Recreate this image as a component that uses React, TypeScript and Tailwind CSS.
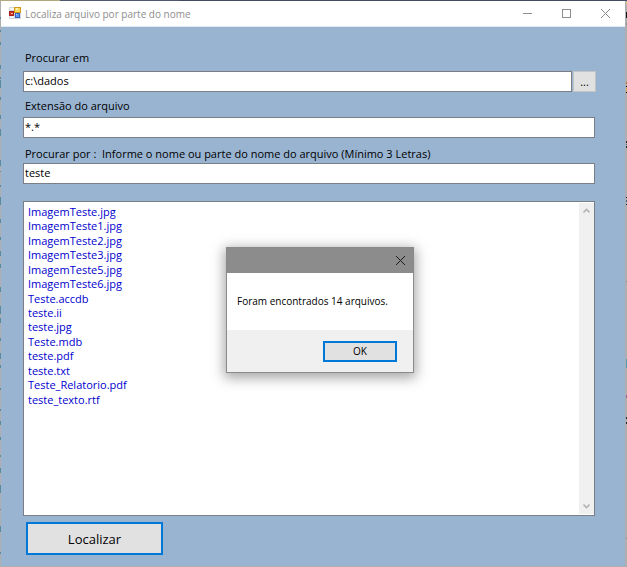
import { useState } from "react";

const FILES = [
  "ImagemTeste.jpg",
  "ImagemTeste1.jpg",
  "ImagemTeste2.jpg",
  "ImagemTeste3.jpg",
  "ImagemTeste5.jpg",
  "ImagemTeste6.jpg",
  "Teste.accdb",
  "teste.ii",
  "teste.jpg",
  "Teste.mdb",
  "teste.pdf",
  "teste.txt",
  "Teste_Relatorio.pdf",
  "teste_texto.rtf",
];

const INPUT =
  "h-[21px] w-full min-w-0 border border-[#7a7f86] bg-white px-px pb-[3px] text-[11px] leading-4 text-black outline-none";
const LABEL = "block px-0.5 text-[11px] leading-4 whitespace-pre text-black";

function AppIcon() {
  return (
    <svg width="13" height="13" viewBox="0 0 13 13" shapeRendering="crispEdges" aria-hidden="true">
      <rect x="0" y="0" width="12" height="12" fill="#d4d7dc" />
      <rect x="1" y="1" width="4" height="2" fill="#f3f5f8" />
      <rect x="1" y="9" width="4" height="2" fill="#eef1f6" />
      <rect x="5" y="0" width="7" height="6" fill="#d19a1f" />
      <rect x="6" y="1" width="5" height="4" fill="#fbd75a" />
      <rect x="7" y="1" width="2" height="2" fill="#fff0b0" />
      <rect x="0" y="4" width="5" height="5" fill="#a3201c" />
      <rect x="1" y="5" width="3" height="3" fill="#d23b2c" />
      <rect x="2" y="6" width="2" height="1" fill="#f7a58e" />
      <rect x="6" y="6" width="5" height="5" fill="#2f62c0" />
      <rect x="7" y="7" width="3" height="3" fill="#5f97ee" />
      <rect x="7" y="7" width="1" height="1" fill="#b9d5ff" />
    </svg>
  );
}

const LEFT_MARKS = [
  [17, 2], [30, 2], [42, 3], [65, 4], [77, 2], [80, 8], [97, 3], [115, 4], [129, 7], [160, 6],
  [171, 1], [185, 2], [197, 8], [219, 4], [237, 3], [251, 5], [264, 4], [287, 5], [306, 8], [318, 5],
  [338, 3], [353, 6], [365, 3], [388, 2], [409, 2], [421, 4], [437, 3], [455, 2], [468, 5], [485, 8], [509, 1], [526, 6], [552, 2],
];

const RIGHT_MARKS: [number, number, string][] = [
  [2, 2, "#e3cf5f"], [12, 6, "#1c1216"], [23, 2, "#8f9299"], [82, 2, "#b8703a"], [86, 1, "#111111"],
  [88, 4, "#d8a860"], [92, 1, "#111111"], [141, 2, "#1b2a38"], [144, 1, "#3b6a8c"], [146, 2, "#1b2a38"],
  [197, 1, "#1b2a38"], [200, 2, "#3b6a8c"], [204, 1, "#1b2a38"], [281, 1, "#858585"], [359, 9, "#4f9db0"],
  [395, 3, "#9a5f95"], [417, 2, "#1b2a38"], [422, 2, "#1b2a38"], [538, 1, "#858585"],
];

/* Slivers of the editor that show behind the window's edges. */
function Desktop() {
  return (
    <div aria-hidden="true">
      <svg width="180" height="1" className="absolute top-0 left-0">
        <rect width="60" height="1" fill="#b0a87c" />
        <rect x="60" width="120" height="1" fill="#505870" />
      </svg>
      <svg width="1" height="556" className="absolute top-0 left-0">
        {LEFT_MARKS.map(([y, h]) => (
          <rect key={y} y={y} width="1" height={h} fill="#5a8a9c" />
        ))}
      </svg>
      <svg width="2" height="556" className="absolute top-0 right-0">
        {RIGHT_MARKS.map(([y, h, fill]) => (
          <rect key={y} x="1" y={y} width="1" height={h} fill={fill} />
        ))}
      </svg>
    </div>
  );
}

function TitleBar() {
  return (
    <header className="flex h-[26px] items-center border-b border-[#dfe7f0] bg-white pl-2 text-[#8e8e8e]">
      <AppIcon />
      <h1 className="ml-[3px] flex-1 text-[10px] leading-4">Localiza arquivo por parte do nome</h1>
      <button aria-label="Minimizar" className="grid h-full w-[39px] place-items-center">
        <svg width="9" height="9" stroke="currentColor" aria-hidden="true">
          <path d="M0 4.5h9" />
        </svg>
      </button>
      <button aria-label="Maximizar" className="grid h-full w-[39px] place-items-center">
        <svg width="9" height="9" fill="none" stroke="currentColor" aria-hidden="true">
          <rect x="0.5" y="0.5" width="8" height="8" />
        </svg>
      </button>
      <button aria-label="Fechar" className="grid h-full w-[39px] place-items-center">
        <svg width="9" height="9" stroke="currentColor" aria-hidden="true">
          <path d="M0 0l9 9M9 0L0 9" />
        </svg>
      </button>
    </header>
  );
}

function MessageBox({ onClose }: { onClose: () => void }) {
  return (
    <div
      role="dialog"
      aria-label="Resultado"
      className="absolute top-[247px] left-[226px] w-[188px] border border-[#8a8a8a] bg-white shadow-[0_3px_12px_2px_rgba(0,0,0,0.35)]"
    >
      <div className="flex h-[25px] justify-end bg-[#8c8c8c]">
        <button aria-label="Fechar mensagem" onClick={onClose} className="grid w-[26px] place-items-center text-[#1a1a1a]">
          <svg width="9" height="9" stroke="currentColor" aria-hidden="true">
            <path d="M0 0l9 9M9 0L0 9" />
          </svg>
        </button>
      </div>
      <p className="flex h-[57px] items-center px-2.5 text-[10px] whitespace-nowrap text-black">
        Foram encontrados 14 arquivos.
      </p>
      <div className="flex h-[42px] items-center justify-end bg-[#f0f0f0] pr-4">
        <button
          onClick={onClose}
          className="h-[21px] w-[74px] border-2 border-[#0078d7] bg-[#e1e1e1] text-[10px] leading-4 text-black"
        >
          OK
        </button>
      </div>
    </div>
  );
}

export default function App() {
  const [open, setOpen] = useState(true);
  return (
    <div className="relative min-h-screen bg-[#aeaeb0] font-['Open_Sans','Noto_Sans',sans-serif]">
      <div className="h-px bg-[#454a60]" />
      <Desktop />
      <main className="mr-0.5 mb-px ml-px bg-[#99b4d1]">
        <TitleBar />
        <form className="pt-[23px] pr-[21px] pb-[11px] pl-[22px]" onSubmit={(e) => e.preventDefault()}>
          <label htmlFor="folder" className={LABEL}>Procurar em</label>
          <div className="mt-[5px] flex gap-px pr-2">
            <input id="folder" defaultValue="c:\dados" className={INPUT} />
            <button type="button" className="h-[21px] w-[23px] shrink-0 border border-[#c4c4c4] bg-[#e1e1e1] text-[11px] leading-4 text-black">
              ...
            </button>
          </div>
          <div className="pr-[9px]">
            <label htmlFor="ext" className={LABEL + " mt-1.5 mb-[3px]"}>Extensão do arquivo</label>
            <input id="ext" defaultValue="*.*" className={INPUT + " block"} />
            <label htmlFor="name" className={LABEL + " mt-2 mb-px"}>
              {"Procurar por :  Informe o nome ou parte do nome do arquivo (Mínimo 3 Letras)"}
            </label>
            <input id="name" defaultValue="teste" className={INPUT + " block"} />
            <div className="mt-[17px] flex h-[315px] border border-[#7a7f86] bg-white">
              <ul className="mt-[3px] grid h-[202px] flex-1 auto-rows-fr px-1 text-[11px] leading-[14px] text-[#0000cd]">
                {FILES.map((f) => (
                  <li key={f}>{f}</li>
                ))}
              </ul>
              <div className="my-px flex w-[15px] flex-col items-center justify-between bg-[#f0f0f0] py-1 text-[#b4b4b4]">
                <svg width="7" height="7" fill="none" stroke="currentColor" strokeWidth="1.6" aria-hidden="true">
                  <path d="M0.5 5.5l3-3 3 3" />
                </svg>
                <svg width="7" height="7" fill="none" stroke="currentColor" strokeWidth="1.6" aria-hidden="true">
                  <path d="M0.5 1.5l3 3 3-3" />
                </svg>
              </div>
            </div>
          </div>
          <button
            type="submit"
            onClick={() => setOpen(true)}
            className="mt-1.5 ml-[3px] block h-[33px] w-[137px] border-2 border-[#0078d7] bg-[#e1e1e1] text-[13px] leading-5 text-black"
          >
            Localizar
          </button>
        </form>
      </main>
      {open && <MessageBox onClose={() => setOpen(false)} />}
    </div>
  );
}
